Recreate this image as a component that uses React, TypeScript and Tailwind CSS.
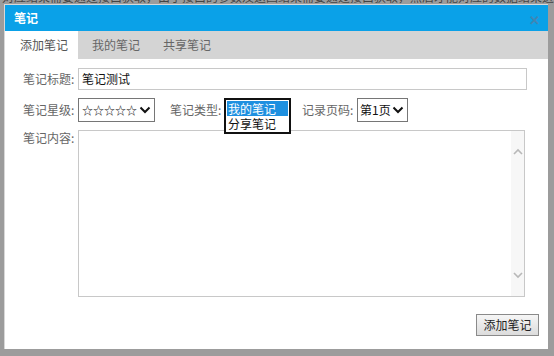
import React from "react";

const font = { fontFamily: '"Noto Sans CJK SC", "Noto Sans", sans-serif' };

function Chevron() {
  return (
    <svg width="12" height="8" viewBox="0 0 12 8" className="shrink-0">
      <path d="M1.5 1.5 L6 6 L10.5 1.5" fill="none" stroke="#111" strokeWidth="2" />
    </svg>
  );
}

export default function App() {
  return (
    <div
      className="w-[554px] h-[356px] bg-[#9c9c9c] flex flex-col overflow-hidden"
      style={font}
    >
      <div className="h-[4px] overflow-hidden shrink-0">
        <div className="text-[12px] leading-[12px] mt-[-9px] text-[#444] whitespace-nowrap pl-[2px]">
          对应结果需要通过接口获取，由于接口的参数及返回结果需要通过接口获取，然后才能对应的数据结果进行处理
        </div>
      </div>
      <div className="ml-[4px] mr-[6px] h-[345px] bg-white flex flex-col border-l border-t border-[#d8d8d8]">
        <div className="h-[26px] bg-[#0aa1e8] flex items-center justify-between pl-[9px] pr-[8px] shrink-0">
          <span className="text-white font-bold text-[12px] leading-none">笔记</span>
          <span className="text-[#3f86b5] text-[13px] leading-none font-bold mt-[2px]">✕</span>
        </div>
        <div className="h-[28px] bg-[#d4d4d4] flex items-stretch text-[12px] shrink-0">
          <div className="w-[73px] bg-white flex items-center pl-[15px] text-[#555]">添加笔记</div>
          <div className="w-[72px] flex items-center pl-[14px] text-[#666]">我的笔记</div>
          <div className="flex items-center pl-[13px] text-[#666]">共享笔记</div>
        </div>
        <div className="flex flex-col pl-[18px] pr-[21px] pt-[9px] text-[12px] text-[#666]">
          <div className="flex items-center h-[22px]">
            <span className="w-[55px] shrink-0 whitespace-nowrap">笔记标题:</span>
            <div className="flex-1 h-[22px] border border-[#c8c8c8] flex items-center pl-[3px] text-[#111] text-[12px]">
              笔记测试
            </div>
          </div>
          <div className="flex items-center h-[24px] mt-[8px]">
            <span className="w-[55px] shrink-0 whitespace-nowrap">笔记星级:</span>
            <div className="w-[77px] h-[24px] border border-[#767676] flex items-center justify-between pl-[3px] pr-[3px] text-[#111]">
              <span className="text-[11px]">☆☆☆☆☆</span>
              <Chevron />
            </div>
            <span className="ml-[15px] w-[54px] shrink-0 whitespace-nowrap">笔记类型:</span>
            <div className="relative w-[67px] h-[24px]">
              <div className="absolute left-0 top-0 w-[67px] h-[36px] border-2 border-[#111] bg-white flex flex-col text-[#111] text-[12px] pl-[1px] pt-[1px] pr-[1px]">
                <div className="h-[15px] leading-[15px] bg-[#1e90e0] text-white pl-[1px] overflow-hidden">我的笔记</div>
                <div className="h-[15px] leading-[15px] pl-[1px] overflow-hidden">分享笔记</div>
              </div>
            </div>
            <span className="ml-[11px] w-[55px] shrink-0 whitespace-nowrap">记录页码:</span>
            <div className="w-[51px] h-[24px] border border-[#767676] flex items-center justify-between pl-[2px] pr-[3px] text-[#111] text-[12px]">
              <span>第1页</span>
              <Chevron />
            </div>
          </div>
          <div className="flex items-start mt-[8px]">
            <span className="w-[55px] shrink-0 leading-[15px] whitespace-nowrap">笔记内容:</span>
            <div className="w-[447px] h-[167px] border border-[#c8c8c8] flex justify-end">
              <div className="w-[13px] h-full bg-[#f7f7f7] flex flex-col items-center justify-between py-[17px]">
                <svg width="10" height="7" viewBox="0 0 10 7">
                  <path d="M1 6 L5 2 L9 6" fill="none" stroke="#b8b8b8" strokeWidth="1.6" />
                </svg>
                <svg width="10" height="7" viewBox="0 0 10 7">
                  <path d="M1 1 L5 5 L9 1" fill="none" stroke="#b8b8b8" strokeWidth="1.6" />
                </svg>
              </div>
            </div>
          </div>
        </div>
        <div className="flex justify-end pr-[9px] mt-[17px]">
          <button className="w-[63px] h-[22px] border border-[#8a8a8a] bg-gradient-to-b from-[#f6f6f6] to-[#dcdcdc] text-[12px] text-[#222] flex items-center justify-center">
            添加笔记
          </button>
        </div>
      </div>
    </div>
  );
}
